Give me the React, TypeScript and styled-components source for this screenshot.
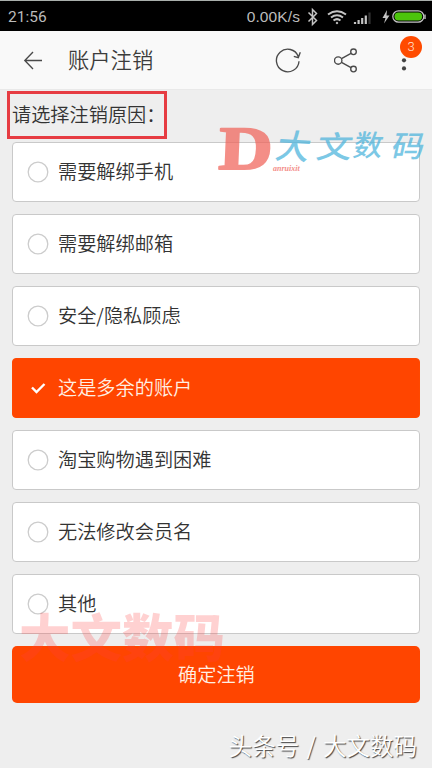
import React, { useState } from "react";
import styled, { createGlobalStyle } from "styled-components";

const GlobalStyle = createGlobalStyle`
  * { box-sizing: border-box; }
  body { margin: 0; background: #eee; }
`;

const Screen = styled.div`
  position: relative;
  width: 432px;
  height: 768px;
  overflow: hidden;
  background: #eee;
  font-family: "Noto Sans CJK SC", sans-serif;
  font-weight: 350;
  color: #333;
`;

const StatusBar = styled.header`
  display: flex;
  align-items: center;
  justify-content: space-between;
  height: 31px;
  padding: 2px 4px 0 8px;
  background: #000;
  border-top: 1px solid #a9afab;
  color: #bbb;
  font-family: Roboto, sans-serif;
  font-weight: 400;
  font-size: 15.5px;
`;

const StatusGroup = styled.div`
  display: flex;
  align-items: center;
`;

const Speed = styled.span`
  font-family: "Liberation Sans", sans-serif;
  font-size: 15.5px;
  letter-spacing: 0.1px;
  margin-right: 4px;
`;

const StatusIcons = styled.svg`
  display: block;
  width: 124px;
  height: 24px;
`;

const TitleBar = styled.nav`
  display: flex;
  align-items: center;
  height: 59px;
  padding: 0 19px 0 22px;
  background: #f9f9f9;
  border-bottom: 1px solid #e9e9e9;
`;

const Title = styled.h1`
  flex: 1;
  margin: -2px 0 0 26px;
  font-size: 21.3px;
  font-weight: 350;
  line-height: 30px;
  color: #3c3c3c;
`;

const IconButton = styled.button<{ $gap?: number }>`
  position: relative;
  display: block;
  margin: 0 0 0 ${(p) => p.$gap ?? 0}px;
  padding: 0;
  border: 0;
  background: none;
  svg {
    display: block;
    fill: none;
    stroke: #4a4a4a;
    stroke-width: 1.35;
  }
`;

const Badge = styled.span`
  position: absolute;
  left: -1px;
  top: -11px;
  width: 22px;
  height: 22px;
  border-radius: 50%;
  background: #ff4b00;
  color: #ffe3d5;
  font: 300 13px/22px Roboto, sans-serif;
  text-align: center;
`;

const Prompt = styled.h2`
  width: 160px;
  height: 48px;
  margin: 1px 0 3px 7px;
  padding: 0 0 4px 2px;
  border: 3px solid #e63c42;
  font-size: 19.2px;
  font-weight: 350;
  line-height: 40px;
  white-space: nowrap;
`;

const Form = styled.form`
  display: flex;
  flex-direction: column;
  gap: 12px;
  padding: 0 11.600px 0 12.400px;
`;

const Option = styled.label<{ $selected: boolean }>`
  display: flex;
  align-items: center;
  height: 60px;
  padding: 0 0 2px 13.600px;
  border: 1px solid ${(p) => (p.$selected ? "#ff4800" : "#c9c9c9")};
  border-radius: 4px;
  background: ${(p) => (p.$selected ? "#ff4500" : "#fff")};
  color: ${(p) => (p.$selected ? "#fff0e4" : "#333")};
  font-size: 19.2px;
  line-height: 28px;
  input { display: none; }
  svg {
    flex: none;
    width: 22px;
    height: 22px;
    margin: 2px 9px 0 0;
    fill: none;
  }
`;

const Submit = styled.button`
  height: 57px;
  padding: 0;
  border: 0;
  border-radius: 5px;
  background: #ff4500;
  color: #fff0e4;
  font: 350 19.2px/57px "Noto Sans CJK SC", sans-serif;
`;

const Logo = styled.div`
  position: absolute;
  left: 217px;
  top: 122px;
  width: 215px;
  height: 56px;
  pointer-events: none;
  svg { display: block; overflow: visible; }
`;

const BrandMark = styled.div`
  position: absolute;
  left: 19px;
  top: 602px;
  font-size: 51.500px;
  font-weight: 900;
  line-height: 66px;
  white-space: nowrap;
  color: rgba(255, 64, 64, 0.24);
  pointer-events: none;
`;

const Credit = styled.footer`
  position: absolute;
  right: 15px;
  top: 729px;
  font-size: 23.5px;
  font-weight: 350;
  line-height: 32px;
  white-space: nowrap;
  word-spacing: 2px;
  color: #fff;
  text-shadow: 1px 1px 1px #444;
`;

const reasons = [
  "需要解绑手机",
  "需要解绑邮箱",
  "安全/隐私顾虑",
  "这是多余的账户",
  "淘宝购物遇到困难",
  "无法修改会员名",
  "其他",
];

function StatusGlyphs() {
  return (
    <StatusIcons viewBox="0 0 124 24" fill="none" stroke="#c4c4c4">
      <path d="M4.500 7.500l8 8-4 4v-15l4 4-8 8" strokeWidth="1.5" />
      <g strokeWidth="2">
        <path d="M24 9.500q9-6.500 18 0M27 12.500q6-4.500 12 0M29.500 15.500q3.500-2.700 7 0" />
        <circle cx="33" cy="18" r="0.800" fill="#c4c4c4" strokeWidth="1" />
      </g>
      <g strokeWidth="2.200">
        <path d="M51 19v-2M54.600 19v-4M58.200 19v-6M61.800 19v-8.500" />
        <path d="M65.500 19v-11.500" stroke="#333" />
      </g>
      <path d="M83 5l-4.500 8h3l-1.500 5.500 5.500-8h-3z" fill="#c4c4c4" stroke="none" />
      <rect x="88.800" y="5.800" width="31" height="11.400" rx="5.700" strokeWidth="1.200" />
      <rect x="90.500" y="7.500" width="27.600" height="8" rx="4" fill="#4cc40c" stroke="none" />
      <path d="M121 9.500v4.500" strokeWidth="1.400" />
    </StatusIcons>
  );
}

export default function App() {
  const [selected, setSelected] = useState(3);
  return (
    <>
      <GlobalStyle />
      <Screen>
        <StatusBar>
          <span>21:56</span>
          <StatusGroup>
            <Speed>0.00K/s</Speed>
            <StatusGlyphs />
          </StatusGroup>
        </StatusBar>
        <TitleBar>
          <IconButton aria-label="返回">
            <svg width="20" height="20" viewBox="0 0 20 20">
              <path d="M20.500 10.500H2.500M11 2L2.800 10.500 11 19" />
            </svg>
          </IconButton>
          <Title>账户注销</Title>
          <IconButton aria-label="刷新">
            <svg width="26" height="26" viewBox="0 0 26 26">
              <path d="M24 14.200A11.300 11.300 0 1 1 23.300 9.500M18.800 9.300l4.500 1.300 2-5.400" />
            </svg>
          </IconButton>
          <IconButton $gap={33} aria-label="分享">
            <svg width="24" height="26" viewBox="0 0 24 26">
              <circle cx="4.200" cy="13.500" r="3.700" />
              <circle cx="19.500" cy="4.800" r="2.800" />
              <circle cx="19.500" cy="22" r="2.800" />
              <path d="M7.500 11.700l9.500-5.400M7.500 15.300l9.500 5.400" />
            </svg>
          </IconButton>
          <IconButton $gap={43} aria-label="更多">
            <svg width="12" height="26" viewBox="0 0 12 26">
              <g fill="#444" stroke="none">
                <circle cx="3" cy="13.300" r="2.100" />
                <circle cx="3" cy="21.400" r="2.100" />
              </g>
            </svg>
            <Badge>3</Badge>
          </IconButton>
        </TitleBar>
        <Prompt>请选择注销原因：</Prompt>
        <Form onSubmit={(e) => e.preventDefault()}>
          {reasons.map((reason, i) => (
            <Option key={reason} $selected={i === selected}>
              <input type="radio" name="reason" checked={i === selected} onChange={() => setSelected(i)} />
              <svg viewBox="0 0 22 22">
                {i === selected ? (
                  <path d="M5 10.500l4.500 4.500 8-8" stroke="#fff" strokeWidth="2.400" />
                ) : (
                  <circle cx="11" cy="11" r="9.800" stroke="#ccc" strokeWidth="1.300" />
                )}
              </svg>
              {reason}
            </Option>
          ))}
          <Submit>确定注销</Submit>
        </Form>
        <Logo>
          <svg width="215" height="56" viewBox="0 0 215 56">
            <g fill="#f06359" opacity=".72">
              <text transform="translate(1 47) scale(1.15 .95) skewX(-2)" fontFamily="Liberation Serif" fontWeight="700" fontSize="65" stroke="#f06359" strokeWidth="2" strokeLinejoin="round">D</text>
              <text x="56" y="49" fontFamily="Liberation Serif" fontStyle="italic" fontWeight="700" fontSize="8">anruixit</text>
            </g>
            <g fill="#4bb3dc" opacity=".72" fontFamily="Noto Sans CJK SC" fontWeight="500" fontSize="34">
              <text transform="translate(57 36) rotate(3) skewX(-10)">大</text>
              <text transform="translate(98 36) skewX(-10) scale(1.05 .9)">文</text>
              <text transform="translate(135 34) skewX(-10) scale(.86)">数</text>
              <text transform="translate(173 35) skewX(-12) scale(.96 .88)">码</text>
            </g>
          </svg>
        </Logo>
        <BrandMark>大文数码</BrandMark>
        <Credit>头条号 / 大文数码</Credit>
      </Screen>
    </>
  );
}
